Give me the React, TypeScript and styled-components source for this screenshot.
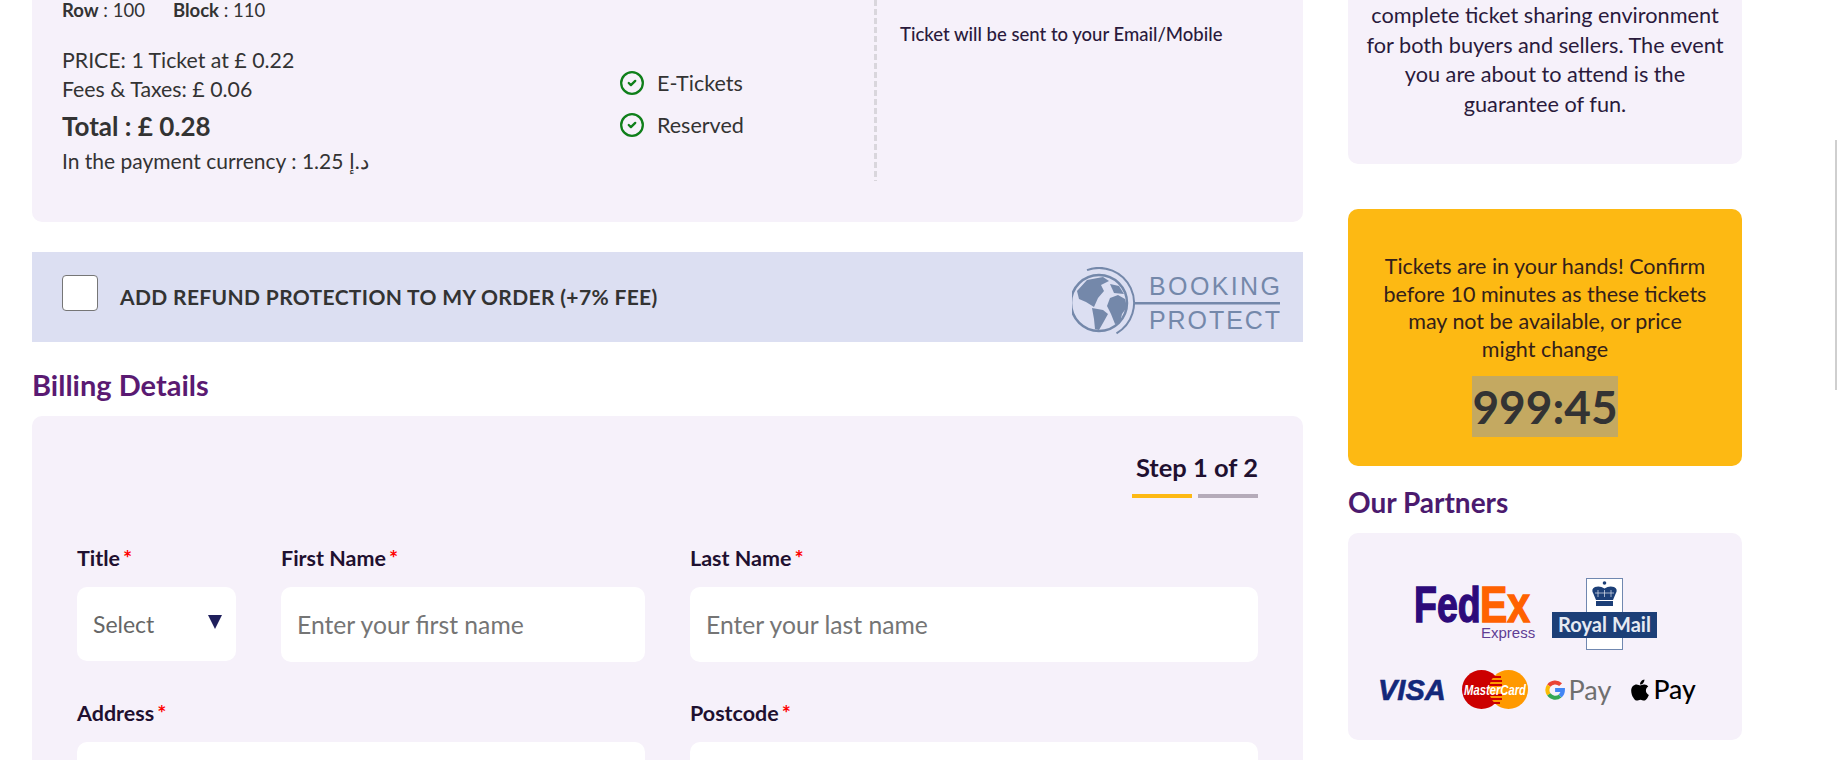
import React from 'react';
import styled, { createGlobalStyle } from 'styled-components';
import { CircleCheck } from 'lucide-react';
import { FaApple } from 'react-icons/fa';

const GlobalStyle = createGlobalStyle`
    html, body {
        margin: 0;
        height: 760px;
        overflow: hidden;
        background: #fff;
        font-family: "Lato", "Noto Sans", sans-serif;
        color: #333;
    }
    * {
        box-sizing: border-box;
    }
`

const Page = styled.div`
    display: grid;
    grid-template-columns: 1271px 394px;
    column-gap: 45px;
    padding-left: 32px;
    height: 760px;
    overflow: hidden;
`

const Column = styled.div`
    display: flex;
    flex-direction: column;
`

const ScrollThumb = styled.div`
    position: absolute;
    top: 140px;
    right: 0;
    width: 2px;
    height: 250px;
    background: #cfcfcf;
`

const SummaryCard = styled.section`
    display: flex;
    flex: 0 0 222px;
    padding: 0 0 41px 30px;
    background: #f6f1fa;
    border-radius: 0 0 10px 10px;
`

const Pricing = styled.div`
    flex: 0 0 558px;
`

const SeatLine = styled.div`
    display: flex;
    gap: 28px;
    font-size: 18.5px;
    line-height: 21px;
    b {
        font-weight: 700;
    }
`

const PriceLine = styled.div<{ $first?: boolean }>`
    margin-top: ${p => (p.$first ? '24.5px' : '0')};
    font-size: 21.3px;
    line-height: 29px;
`

const TotalLine = styled.div`
    margin-top: 4.5px;
    font-size: 26px;
    font-weight: 700;
    line-height: 36px;
`

const CurrencyLine = styled.div`
    margin-top: 2px;
    font-size: 21px;
    line-height: 30px;
`

const Features = styled.div`
    flex: 0 0 254px;
    display: flex;
    flex-direction: column;
    gap: 16px;
    padding-top: 70px;
`

const Feature = styled.div`
    display: flex;
    align-items: center;
    gap: 12px;
    margin-left: -1px;
    font-size: 21.5px;
    line-height: 24px;
    svg {
        color: #0f7f1a;
    }
`

const Notes = styled.div`
    flex: 1;
    padding: 24px 0 0 26px;
    background-image: repeating-linear-gradient(#d9d6dc 0 6px, transparent 6px 9px);
    background-size: 3px 100%;
    background-repeat: no-repeat;
    font-size: 18.5px;
    font-weight: 500;
    line-height: 20px;
    color: #2a1a3c;
`

const RefundBar = styled.label`
    display: flex;
    flex: 0 0 90px;
    align-items: center;
    margin-top: 30px;
    padding: 0 23px 0 30px;
    background: #dcdff2;
`

const RefundBox = styled.input`
    appearance: none;
    width: 36px;
    height: 36px;
    margin: -8px 22px 0 0;
    background: #fff;
    border: 1px solid #767676;
    border-radius: 4px;
`

const RefundText = styled.span`
    margin-top: -1px;
    font-size: 21px;
    font-weight: 700;
    letter-spacing: 0.35px;
    color: #333;
`

const ProtectLogo = styled.svg`
    margin: 10px 0 0 auto;
`

const BillingTitle = styled.h2`
    margin: 25px 0 13px;
    font-size: 29px;
    font-weight: 700;
    line-height: 36px;
    color: #5a1a72;
`

const BillingCard = styled.section`
    flex: 1;
    padding: 36px 45px 0;
    background: #f6f1fa;
    border-radius: 10px 10px 0 0;
`

const StepBlock = styled.div`
    display: flex;
    flex-direction: column;
    align-items: flex-end;
`

const StepText = styled.div`
    font-size: 25.5px;
    font-weight: 700;
    line-height: 30px;
    color: #1f1030;
`

const StepBars = styled.div`
    display: flex;
    gap: 6px;
    margin-top: 12px;
`

const StepBar = styled.span<{ $active?: boolean }>`
    width: 60px;
    height: 4px;
    background: ${p => (p.$active ? '#fdb913' : '#b5abb9')};
`

const FormGrid = styled.div`
    display: grid;
    grid-template-columns: 159px 364px 568px;
    column-gap: 45px;
    row-gap: 39px;
    margin-top: 48px;
`

const Field = styled.div<{ $wide?: boolean }>`
    grid-column: ${p => (p.$wide ? 'span 2' : 'auto')};
    position: relative;
`

const Label = styled.div`
    margin-bottom: 16px;
    font-size: 21.5px;
    font-weight: 700;
    line-height: 25px;
    color: #1f1030;
    i {
        margin-left: 3px;
        font-style: normal;
        color: #f00;
    }
`

const TextInput = styled.input`
    display: block;
    width: 100%;
    height: 75px;
    padding: 0 16px;
    background: #fff;
    border: 0;
    border-radius: 10px;
    font-family: inherit;
    font-size: 24.7px;
    &::placeholder {
        color: #757575;
    }
`

const SelectInput = styled.select`
    display: block;
    width: 100%;
    height: 74px;
    margin-bottom: 1px;
    padding: 0 16px;
    appearance: none;
    background: #fff;
    border: 0;
    border-radius: 10px;
    font-family: inherit;
    font-size: 23px;
    color: #666;
`

const SelectArrow = styled.span`
    position: absolute;
    top: 69px;
    right: 14px;
    border-left: 7px solid transparent;
    border-right: 7px solid transparent;
    border-top: 14px solid #1f1f5c;
`

const InfoPanel = styled.section`
    flex: 0 0 164px;
    padding-top: 1px;
    background: #f6f1fa;
    border-radius: 0 0 10px 10px;
    font-size: 21.7px;
    line-height: 29.6px;
    text-align: center;
    white-space: nowrap;
    color: #2a1a3c;
`

const TimerCard = styled.section`
    flex: 0 0 257px;
    margin-top: 45px;
    padding-top: 44px;
    background: #fdb913;
    border-radius: 10px;
    text-align: center;
`

const TimerText = styled.p`
    margin: 0 0 12.6px;
    font-size: 21.5px;
    line-height: 27.6px;
    white-space: nowrap;
    color: #33201a;
`

const TimerValue = styled.span`
    display: inline-block;
    background: #c4a961;
    font-size: 46px;
    font-weight: 700;
    line-height: 61px;
    color: #333;
`

const PartnersTitle = styled.h2`
    margin: 18px 0 13px;
    font-size: 28px;
    font-weight: 700;
    line-height: 36px;
    color: #4b1a6e;
`

const PartnersCard = styled.section`
    flex: 0 0 207px;
    display: flex;
    flex-direction: column;
    align-items: center;
    gap: 20px;
    padding: 45px 19px 0 0;
    background: #f6f1fa;
    border-radius: 10px;
`

const LogoRow = styled.div<{ $gap: number; $shift?: number }>`
    display: flex;
    align-items: center;
    gap: ${p => p.$gap}px;
    margin-left: ${p => p.$shift || 0}px;
`

const LogoSvg = styled.svg`
    display: block;
    overflow: visible;
`

const GooglePay = styled.div`
    display: flex;
    align-items: center;
    gap: 3px;
    width: 66px;
    font-size: 27px;
    line-height: 27px;
    color: #6f6f6f;
`

const ApplePay = styled.div`
    display: flex;
    align-items: center;
    gap: 1px;
    font-size: 26.5px;
    font-weight: 500;
    line-height: 27px;
    color: #000;
`

const logoFont = '"Liberation Sans", Arial, sans-serif';

const BookingProtectLogo = () => (
    <ProtectLogo width="208" height="70" viewBox="0 0 208 70">
        <circle cx="27" cy="36" r="28" fill="none" stroke="#7488aa" strokeWidth="2.5" />
        <path d="M15 3.1 A 35 35 0 0 1 44.5 66.3" fill="none" stroke="#7488aa" strokeWidth="2" />
        <g fill="#7488aa" transform="translate(-3 0)">
            <path d="M8 24 L18 13 L34 10 L40 14 L32 18 L35 24 L29 31 L25 40 L17 35 L10 32 Z" />
            <path d="M23 41 L34 43 L39 47 L34 56 L30 63 L26 62 L25 52 Z" />
            <path d="M41 31 L49 28 L56 32 L58 40 L53 47 L51 56 L46 57 L42 47 L38 39 Z" />
            <path d="M41 17 L50 19 L55 27 L45 26 Z" />
        </g>
        <rect x="62" y="35" width="146" height="2.5" fill="#7488aa" />
        <text x="77" y="28" fontFamily={logoFont} fontSize="25" fill="#7488aa" textLength="131">BOOKING</text>
        <text x="77" y="62" fontFamily={logoFont} fontSize="25" fill="#7488aa" textLength="131">PROTECT</text>
    </ProtectLogo>
);

const FedExLogo = () => (
    <LogoSvg width="120" height="60" viewBox="0 0 120 60">
        <g fontFamily={logoFont} fontSize="50" fontWeight="700" strokeWidth="1.4">
            <text transform="translate(0 38) scale(0.75 1)" fill="#2d0a7a" stroke="#2d0a7a">Fed</text>
            <text transform="translate(66 38) scale(0.82 1)" fill="#ff6200" stroke="#ff6200">Ex</text>
        </g>
        <text x="67" y="54" fontFamily={logoFont} fontSize="15" fill="#5f3d94">Express</text>
    </LogoSvg>
);

const RoyalMailLogo = () => (
    <LogoSvg width="105" height="72" viewBox="0 0 105 72">
        <rect x="34.5" y="0.5" width="36" height="71" fill="#fff" stroke="#7088b0" />
        <circle cx="52.5" cy="5" r="1.8" fill="#1c3f77" />
        <path d="M44 22 L41.5 16 Q38.5 11 43 9 Q48 7.5 52.5 10.5 Q57 7.5 62 9 Q66.5 11 63.5 16 L61 22 Z" fill="#1c3f77" />
        <path d="M46 12v7M52.5 12v7M59 12v7M43 15h19" stroke="#dfe4ee" strokeWidth="0.7" />
        <rect x="44" y="23" width="17" height="5" fill="#1c3f77" />
        <rect y="34" width="105" height="26" fill="#1c3f77" />
        <text x="6" y="53.5" fontFamily="Lato, sans-serif" fontSize="20" fontWeight="700" fill="#e6eaf2" textLength="93">Royal Mail</text>
    </LogoSvg>
);

const VisaLogo = () => (
    <LogoSvg width="67" height="21" viewBox="0 0 67 21">
        <text x="0" y="21" fontFamily={logoFont} fontSize="29" fontWeight="700" fontStyle="italic" fill="#14287a" stroke="#14287a" strokeWidth="0.6">VISA</text>
    </LogoSvg>
);

const MasterCardLogo = () => (
    <LogoSvg width="66" height="39" viewBox="0 0 66 39">
        <circle cx="19.5" cy="19.5" r="19.5" fill="#cc0000" />
        <circle cx="46.5" cy="19.5" r="19.5" fill="#ff9900" />
        <path d="M27 7h12M26 11h14M26 15h14M26 25h14M26 29h14M28 33h10" stroke="#cc0000" strokeWidth="2" />
        <text x="2" y="25" fontFamily={logoFont} fontSize="15" fontWeight="700" fontStyle="italic" fill="#fff" textLength="62" lengthAdjust="spacingAndGlyphs">MasterCard</text>
    </LogoSvg>
);

const GoogleG = () => (
    <svg width="24" height="24" viewBox="0 0 22 22" fill="none" strokeWidth="4.4">
        <path d="M17 5.2 A 8.5 8.5 0 0 0 4.2 6.2" stroke="#ea4335" />
        <path d="M4.2 6.2 A 8.5 8.5 0 0 0 4.2 15.8" stroke="#fbbc04" />
        <path d="M4.2 15.8 A 8.5 8.5 0 0 0 16.5 17.5" stroke="#34a853" />
        <path d="M16.5 17.5 A 8.5 8.5 0 0 0 19.5 11 H11" stroke="#4285f4" />
    </svg>
);

const App = () => (
    <>
        <GlobalStyle />
        <ScrollThumb />
        <Page>
            <Column>
                <SummaryCard>
                    <Pricing>
                        <SeatLine>
                            <span><b>Row</b> : 100</span>
                            <span><b>Block</b> : 110</span>
                        </SeatLine>
                        <PriceLine $first>PRICE: 1 Ticket at £ 0.22</PriceLine>
                        <PriceLine>Fees &amp; Taxes: £ 0.06</PriceLine>
                        <TotalLine>Total : £ 0.28</TotalLine>
                        <CurrencyLine>In the payment currency : 1.25 د.إ</CurrencyLine>
                    </Pricing>
                    <Features>
                        <Feature><CircleCheck size={26} strokeWidth={2.1} />E-Tickets</Feature>
                        <Feature><CircleCheck size={26} strokeWidth={2.1} />Reserved</Feature>
                    </Features>
                    <Notes>Ticket will be sent to your Email/Mobile</Notes>
                </SummaryCard>

                <RefundBar>
                    <RefundBox type="checkbox" />
                    <RefundText>ADD REFUND PROTECTION TO MY ORDER (+7% FEE)</RefundText>
                    <BookingProtectLogo />
                </RefundBar>

                <BillingTitle>Billing Details</BillingTitle>
                <BillingCard>
                    <StepBlock>
                        <StepText>Step 1 of 2</StepText>
                        <StepBars>
                            <StepBar $active />
                            <StepBar />
                        </StepBars>
                    </StepBlock>
                    <FormGrid>
                        <Field>
                            <Label>Title<i>*</i></Label>
                            <SelectInput defaultValue="">
                                <option value="">Select</option>
                            </SelectInput>
                            <SelectArrow />
                        </Field>
                        <Field>
                            <Label>First Name<i>*</i></Label>
                            <TextInput placeholder="Enter your first name" />
                        </Field>
                        <Field>
                            <Label>Last Name<i>*</i></Label>
                            <TextInput placeholder="Enter your last name" />
                        </Field>
                        <Field $wide>
                            <Label>Address<i>*</i></Label>
                            <TextInput />
                        </Field>
                        <Field>
                            <Label>Postcode<i>*</i></Label>
                            <TextInput />
                        </Field>
                    </FormGrid>
                </BillingCard>
            </Column>

            <Column>
                <InfoPanel>
                    complete ticket sharing environment<br />
                    for both buyers and sellers. The event<br />
                    you are about to attend is the<br />
                    guarantee of fun.
                </InfoPanel>
                <TimerCard>
                    <TimerText>
                        Tickets are in your hands! Confirm<br />
                        before 10 minutes as these tickets<br />
                        may not be available, or price<br />
                        might change
                    </TimerText>
                    <TimerValue>999:45</TimerValue>
                </TimerCard>
                <PartnersTitle>Our Partners</PartnersTitle>
                <PartnersCard>
                    <LogoRow $gap={18}>
                        <FedExLogo />
                        <RoyalMailLogo />
                    </LogoRow>
                    <LogoRow $gap={17} $shift={3}>
                        <VisaLogo />
                        <MasterCardLogo />
                        <GooglePay><GoogleG />Pay</GooglePay>
                        <ApplePay><FaApple size={24} />Pay</ApplePay>
                    </LogoRow>
                </PartnersCard>
            </Column>
        </Page>
    </>
);

export default App;
